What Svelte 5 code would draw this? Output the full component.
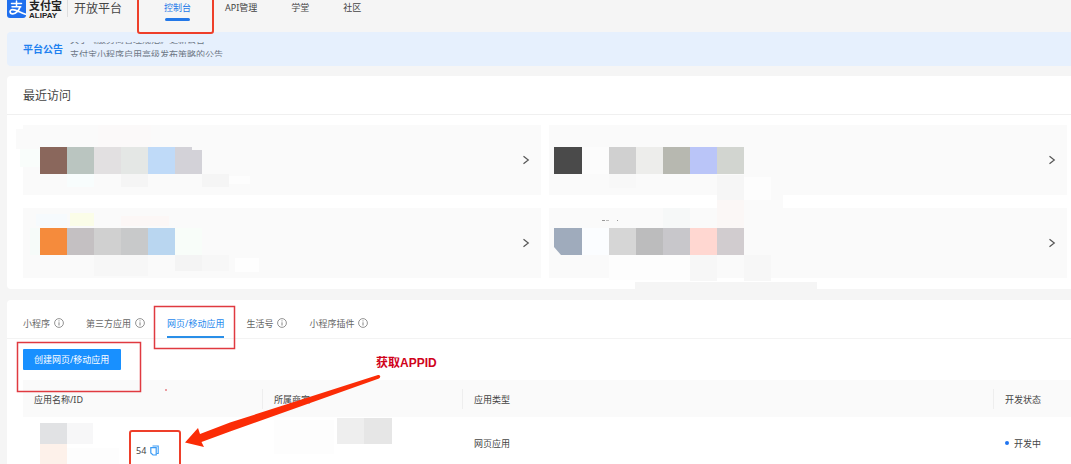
<script lang="ts">
  // Open-platform console: recent visits, the app list and the guide marks
  // that point at the APPID.
  type Patch = [x: number, y: number, w: number, h: number, fill: string];

  const nav = ['控制台', 'API管理', '学堂', '社区'];
  const notices = ['关于《服务商管理规范》更新公告', '支付宝小程序启用高级发布策略的公告'];

  const tabs = [
    { label: '小程序', info: true },
    { label: '第三方应用', info: true },
    { label: '网页/移动应用', info: false },
    { label: '生活号', info: true },
    { label: '小程序插件', info: true },
  ];

  let activeNav = $state('控制台');
  let activeTab = $state('网页/移动应用');

  // Mosaic patches, relative to the top left corner of each card.
  const visits: { name: string; patches: Patch[] }[] = [
    {
      name: '最近访问 1',
      patches: [
        [-7, 4, 24, 20, '#fafafa'],
        [-3, 24, 20, 18, '#f9fdfb'],
        [75, 0, 53, 22, '#fbf9f9'],
        [17, 22, 27, 27, '#8a675c'],
        [44, 22, 27, 27, '#bac5c0'],
        [71, 22, 27, 27, '#e2e0e1'],
        [98, 22, 27, 27, '#e4e7e5'],
        [125, 22, 27, 27, '#bfdaf8'],
        [152, 22, 17, 4, '#d3d2d8'],
        [152, 25, 27, 24, '#d3d2d8'],
        [44, 49, 27, 13, '#f8fdfd'],
        [98, 49, 27, 13, '#f5f5f5'],
        [179, 49, 27, 13, '#f5f5f5'],
        [206, 51, 21, 8, '#fdfdfd'],
      ],
    },
    {
      name: '最近访问 2',
      patches: [
        [5, 22, 28, 27, '#4a4a4a'],
        [33, 22, 27, 27, '#fcfcfc'],
        [60, 22, 27, 27, '#d0d0d0'],
        [87, 22, 27, 27, '#ededeb'],
        [114, 22, 27, 27, '#b7b8b0'],
        [141, 22, 27, 27, '#bac5f8'],
        [168, 22, 27, 27, '#d2d5d0'],
        [60, 49, 27, 14, '#f8f8f8'],
        [169, 70, 65, 14, '#fafafa'],
        [168, 50, 27, 25, '#f6f6f6'],
        [195, 52, 27, 23, '#fdfdfd'],
      ],
    },
    {
      name: '最近访问 3',
      patches: [
        [13, 6, 31, 12, '#f6fafd'],
        [47, 5, 24, 13, '#fbfde8'],
        [98, 8, 48, 10, '#fcf7f6'],
        [7, 20, 10, 27, '#f6fbf9'],
        [17, 20, 27, 27, '#f58b3c'],
        [44, 20, 27, 27, '#c4c0c2'],
        [71, 20, 27, 27, '#d0d0d0'],
        [98, 20, 27, 27, '#c8c9ca'],
        [125, 20, 27, 27, '#b9d6f0'],
        [152, 20, 27, 27, '#f8fdf9'],
        [71, 47, 54, 21, '#f7f7f7'],
        [152, 47, 27, 16, '#f4f4f4'],
        [179, 47, 27, 16, '#f7f7f7'],
        [212, 50, 24, 14, '#fefefe'],
      ],
    },
    {
      name: '最近访问 4',
      patches: [
        [114, 0, 27, 20, '#f6f8f8'],
        [168, -8, 27, 28, '#fbf7f6'],
        [33, 20, 27, 27, '#fbfdff'],
        [60, 20, 27, 27, '#d6d6d6'],
        [87, 20, 27, 27, '#bcbcbd'],
        [114, 20, 27, 27, '#c8c7cb'],
        [141, 20, 27, 27, '#ffd7d1'],
        [168, 20, 27, 27, '#d1cccf'],
        [60, 47, 81, 25, '#fdfdfd'],
        [141, 47, 27, 26, '#f7f7f7'],
        [195, 47, 27, 26, '#f7f7f7'],
        [86, 74, 182, 8, '#f5f5f5'],
        [53, 12, 3, 1, '#999999'],
        [57, 12, 3, 1, '#bbbbbb'],
        [68, 12, 1, 1, '#999999'],
      ],
    },
  ];
</script>

{#snippet mosaic(patches: Patch[])}
  {#each patches as [x, y, w, h, fill]}
    <rect {x} {y} width={w} height={h} {fill} />
  {/each}
{/snippet}

<div class="page">
  <header>
    <a class="brand" href="#home" aria-label="支付宝开放平台">
      <svg class="logo" width="19" height="18" viewBox="0 0 19 18" aria-hidden="true">
        <path d="M0 0h19v15a3 3 0 0 1-3 3H3a3 3 0 0 1-3-3z" fill="#1f6fee" />
        <g fill="none" stroke="#fff" stroke-linecap="round">
          <path d="M4.500 3.500h10M9.500 1v5.500M5 6.700h8.800" stroke-width="1.500" />
          <path d="M13 6.800c-1 3.700-4 7-7.200 7-3.500 0-3.600-4.200-.3-4.200 3.500 0 7 2.600 13 4.600" stroke-width="1.700" />
        </g>
      </svg>
      <span class="wordmark">
        <b>支付宝</b>
        <small>ALIPAY</small>
      </span>
      <span class="platform">开放平台</span>
    </a>
    <nav>
      {#each nav as item}
        <a href="#{item}" class:active={activeNav === item} onclick={() => (activeNav = item)}>{item}</a>
      {/each}
    </nav>
  </header>

  <main>
    <section class="notice">
      <strong>平台公告</strong>
      <div class="ticker">
        <ul>
          {#each notices as notice}
            <li>{notice}</li>
          {/each}
        </ul>
      </div>
    </section>

    <section class="card">
      <h2>最近访问</h2>
      <div class="visits">
        {#each visits as visit}
          <a class="visit" href="#visit" aria-label={visit.name}>
            <svg class="mosaic" width="240" height="70" aria-hidden="true">
              {@render mosaic(visit.patches)}
              {#if visit.name === '最近访问 4'}
                <path d="M5 20h28v27H12l-7-8z" fill="#9fabbc" />
              {/if}
            </svg>
            <svg width="8" height="10" viewBox="0 0 8 10" aria-hidden="true">
              <path d="M1.500 1.200 6.300 5 1.500 8.800" fill="none" stroke="#555" stroke-width="1.200" />
            </svg>
          </a>
        {/each}
      </div>
    </section>

    <section class="card apps">
      <div class="tabs" role="tablist">
        {#each tabs as tab}
          <button
            role="tab"
            class:active={activeTab === tab.label}
            aria-selected={activeTab === tab.label}
            onclick={() => (activeTab = tab.label)}
          >
            {tab.label}
            {#if tab.info}
              <svg width="10" height="10" viewBox="0 0 10 10" aria-hidden="true">
                <circle cx="5" cy="5" r="4.400" fill="none" stroke="#777" stroke-width="0.800" />
                <path d="M5 4.300v3.200M5 2.400v1" stroke="#777" stroke-width="0.900" />
              </svg>
            {/if}
          </button>
        {/each}
      </div>

      <div class="body">
        <button class="primary">创建网页/移动应用</button>

        <table>
          <thead>
            <tr>
              <th class="col-name">应用名称/ID</th>
              <th class="col-owner">所属商家</th>
              <th>应用类型</th>
              <th class="col-status">开发状态</th>
            </tr>
          </thead>
          <tbody>
            <tr>
              <td>
                <div class="app">
                  <svg width="98" height="50" aria-hidden="true">
                    {@render mosaic([
                      [6, 5, 27, 21, '#e1e2e4'],
                      [33, 5, 26, 21, '#f7f7f8'],
                      [6, 26, 27, 24, '#fdf1ea'],
                      [33, 30, 52, 16, '#fdfdfd'],
                    ])}
                  </svg>
                  <span>54</span>
                  <button class="copy" aria-label="复制">
                    <svg width="9" height="11" viewBox="0 0 9 11" aria-hidden="true">
                      <path d="M2.500 1h5.700v7.500H6.500" fill="none" stroke="#3b9bf5" stroke-width="1.100" />
                      <path d="M.8 2.700h5.400v7.300H3L.8 8z" fill="none" stroke="#3b9bf5" stroke-width="1.200" />
                    </svg>
                  </button>
                </div>
              </td>
              <td>
                <svg class="mosaic" width="130" height="50" aria-hidden="true">
                  {@render mosaic([
                    [0, 2, 60, 34, '#fdfdfd'],
                    [63, 0, 27, 26, '#eeeeee'],
                    [90, 0, 28, 26, '#e6e6e6'],
                  ])}
                </svg>
              </td>
              <td>网页应用</td>
              <td><span class="status">开发中</span></td>
            </tr>
          </tbody>
        </table>
      </div>
    </section>
  </main>

  <!-- guide marks drawn over the console -->
  <svg class="marks" width="450" height="480" aria-hidden="true">
    <g fill="none">
      <rect x="138" y="-6" width="75" height="39" rx="2" stroke="#ee3f2a" stroke-width="2" />
      <rect x="154.500" y="306.500" width="80" height="42" stroke="#e03a40" stroke-width="1.500" />
      <rect x="17.500" y="342.500" width="123" height="49" stroke="#e03a40" stroke-width="1.500" />
      <rect x="130" y="431" width="50" height="42" rx="2" stroke="#ee3f2a" stroke-width="2" />
    </g>
    <path
      d="M378 375 230 422.500l-30 11.500-2-6-13 14.500 19 4.500-2.500-5 28.500-10.500L379 378.500c2-1 1.500-4-1-3.500z"
      fill="#fb2c06"
    />
    <circle cx="166" cy="390" r="1" fill="#e67f85" />
  </svg>
  <span class="callout">获取APPID</span>
</div>

<style>
  :global(body) {
    background: #f5f5f5;
  }

  .page {
    position: relative;
    height: 100vh;
    overflow: hidden;
    color: #444;
    font-family: 'Noto Sans', 'Noto Sans CJK SC', sans-serif;
    font-size: 9px;
    line-height: 15px;
  }

  a {
    color: inherit;
    text-decoration: none;
  }

  button {
    padding: 0;
    border: 0;
    background: none;
    color: inherit;
    font: inherit;
    cursor: pointer;
  }

  svg {
    display: block;
    flex: none;
  }

  header {
    display: flex;
    align-items: flex-start;
    height: 32px;
    padding-left: 7px;
  }

  .brand {
    display: flex;
    align-items: flex-start;
  }

  .wordmark {
    display: flex;
    flex-direction: column;
    margin-left: 3px;
    color: #222;
    font-family: 'Liberation Sans', 'Noto Sans CJK SC', sans-serif;
  }

  .wordmark b {
    font-size: 11px;
    font-weight: 600;
    line-height: 12px;
  }

  .wordmark small {
    font-size: 8px;
    font-weight: 600;
    line-height: 7px;
  }

  .platform {
    margin-left: 5px;
    padding-left: 6px;
    border-left: 1px solid #dedede;
    font-size: 12px;
    line-height: 17px;
  }

  nav {
    display: flex;
    gap: 34px;
    margin-left: 42px;
  }

  nav a {
    display: flex;
    flex-direction: column;
    align-items: center;
    line-height: 16px;
  }

  nav a.active {
    color: #2378e8;
  }

  nav a.active::after {
    content: '';
    width: 25px;
    height: 3px;
    margin-top: 2px;
    border-radius: 2px;
    background: #2378e8;
  }

  main {
    padding-left: 7px;
  }

  .notice {
    display: flex;
    align-items: center;
    gap: 7px;
    height: 34px;
    padding-left: 16px;
    border-radius: 4px 0 0 4px;
    background: #e6f0fd;
  }

  .notice strong {
    color: #1e80f0;
    font-size: 10px;
  }

  .ticker {
    height: 15px;
    overflow: hidden;
    color: #6d7785;
  }

  .ticker ul {
    margin: -10px 0 0;
    padding: 0;
    list-style: none;
  }

  .card {
    margin-top: 10px;
    border-radius: 4px 0 0 4px;
    background: #fff;
  }

  .apps {
    margin-top: 11px;
  }

  h2 {
    margin: 0;
    padding: 2px 0 0 16px;
    border-bottom: 1px solid #f0f0f0;
    font-size: 12px;
    font-weight: 400;
    line-height: 36px;
  }

  .visits {
    display: grid;
    grid-template-columns: 1fr 1fr;
    gap: 13px 8px;
    padding: 10px 4px 11px 16px;
  }

  .visit {
    display: flex;
    align-items: center;
    justify-content: space-between;
    height: 70px;
    padding-right: 11px;
    background: #fafafa;
  }

  .mosaic {
    overflow: visible;
  }

  .tabs {
    display: flex;
    gap: 22px;
    padding-left: 16px;
    border-bottom: 1px solid #f3f3f3;
    color: #666;
  }

  .tabs button {
    display: flex;
    align-items: center;
    gap: 4px;
    height: 38px;
    padding-top: 10px;
    box-sizing: border-box;
    border-bottom: 2px solid transparent;
  }

  .tabs .active {
    border-color: #2a8fe8;
    color: #1e88ee;
  }

  .body {
    padding: 10px 0 0 16px;
  }

  .primary {
    padding: 3px 12px 3px 11px;
    border-radius: 1px;
    background: #1890ff;
    color: #fff;
  }

  table {
    width: 100%;
    margin-top: 10px;
    border-collapse: collapse;
    table-layout: fixed;
  }

  th,
  td {
    padding: 1px 0 0 11px;
    font-weight: 400;
    text-align: left;
  }

  th {
    height: 36px;
    background: linear-gradient(#eee, #eee) right / 1px 20px no-repeat #fafafa;
  }

  th:last-child {
    background: #fafafa;
  }

  td {
    height: 50px;
  }

  .col-name {
    width: 229px;
  }

  .col-owner {
    width: 189px;
  }

  .col-status {
    width: 66px;
  }

  .app {
    display: flex;
    align-items: center;
    gap: 4px;
  }

  .app span,
  .copy {
    padding-top: 14px;
  }

  .status {
    display: flex;
    align-items: center;
    gap: 5px;
  }

  .status::before {
    content: '';
    width: 4px;
    height: 4px;
    border-radius: 50%;
    background: #1f74f0;
  }

  .marks {
    position: absolute;
    top: 0;
    left: 0;
    pointer-events: none;
  }

  .callout {
    position: absolute;
    top: 356px;
    left: 376px;
    color: #d0021b;
    font-family: 'Liberation Sans', 'Noto Sans CJK SC', sans-serif;
    font-size: 12px;
    font-weight: 700;
  }
</style>
